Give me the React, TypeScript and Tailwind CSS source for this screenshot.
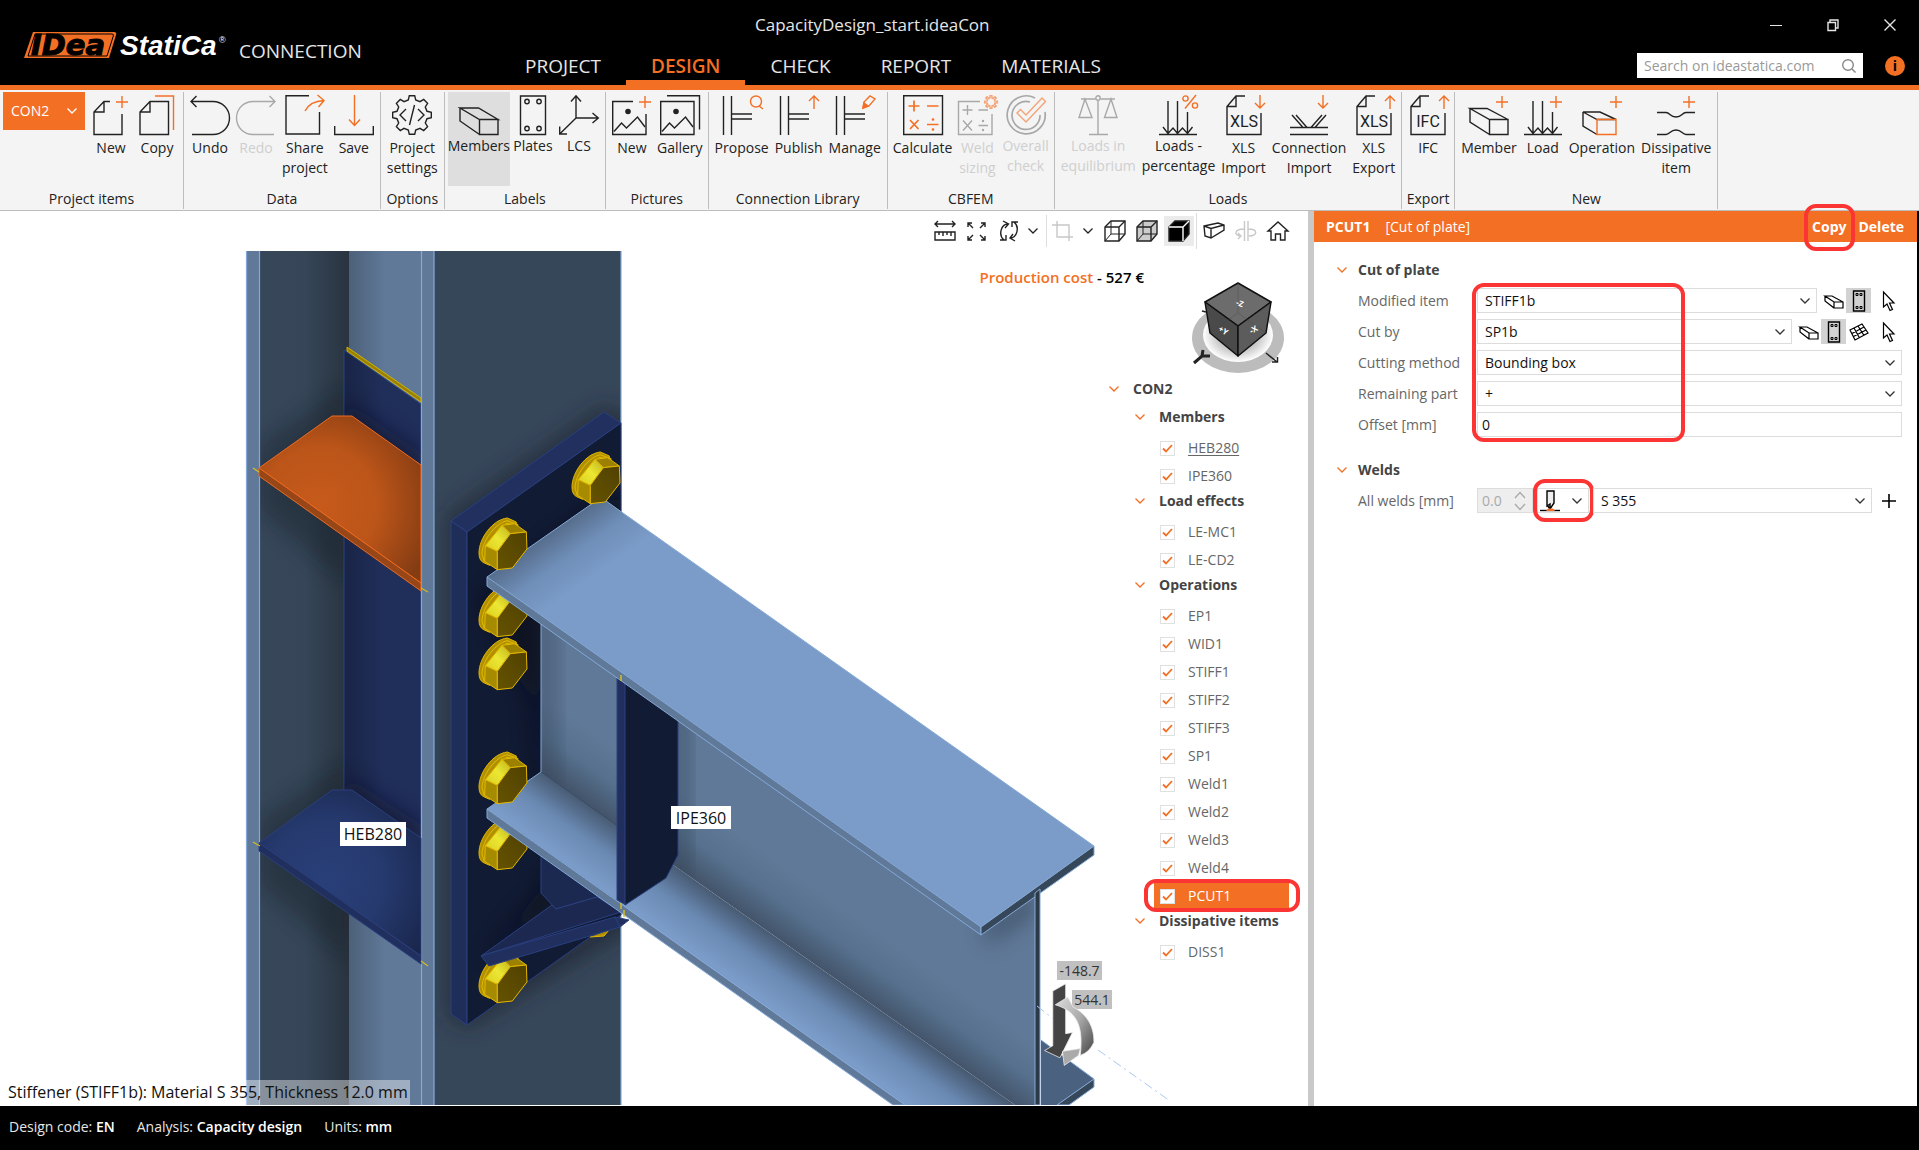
import type { ReactNode } from "react";
import clsx from "clsx";

const ORANGE = "#f36f24";

type IconProps = { children: ReactNode; size?: number; className?: string };

const Icon = ({ children, size = 40, className }: IconProps) => (
  <svg
    width={size}
    height={size}
    viewBox={`0 0 ${size} ${size}`}
    fill="none"
    stroke="currentColor"
    strokeWidth={1.4}
    overflow="visible"
    aria-hidden="true"
    className={clsx("shrink-0", className)}
  >
    {children}
  </svg>
);

const Chevron = ({ className }: { className?: string }) => (
  <svg
    width="10"
    height="6"
    viewBox="0 0 10 6"
    fill="none"
    stroke="currentColor"
    strokeWidth="1.3"
    aria-hidden="true"
    className={clsx("shrink-0", className)}
  >
    <path d="M.5.5 5 5 9.5.5" />
  </svg>
);

const Plus = ({ x, y = 7 }: { x: number; y?: number }) => (
  <path stroke={ORANGE} d={`M${x} ${y - 6}v12M${x - 6} ${y}h12`} />
);

const ArrowV = ({ x, up }: { x: number; up?: boolean }) => (
  <path
    stroke={ORANGE}
    d={
      up
        ? `M${x} 14V1M${x - 5} 6l5-5 5 5`
        : `M${x} 0v13M${x - 5} 8l5 5 5-5`
    }
  />
);

const gearPath = (cx: number, cy: number, outer: number, inner: number) => {
  const points: string[] = [];
  for (let i = 0; i < 8; i++) {
    [
      [-14, inner],
      [-8, outer],
      [8, outer],
      [14, inner],
    ].forEach(([offset, r]) => {
      const a = ((i * 45 + offset) * Math.PI) / 180;
      points.push(
        `${(cx + r * Math.cos(a)).toFixed(1)} ${(cy + r * Math.sin(a)).toFixed(1)}`,
      );
    });
  }
  return `M${points.join("L")}Z`;
};

const SheetIcon = ({ text, up }: { text: string; up?: boolean }) => (
  <Icon>
    <path d="M21 1H12L3 11.5V39.5H37V18M12 1v10.500H3" />
    <text
      x="20"
      y="32"
      textAnchor="middle"
      fill="currentColor"
      stroke="none"
      fontSize="16"
      fontFamily="Roboto, sans-serif"
    >
      {text}
    </text>
    <ArrowV x={36} up={up} />
  </Icon>
);

const NewItemIcon = () => (
  <Icon>
    <path d="M19 6.500H13L3 17V39.500H31V19M13 6.500V17H3" />
    <Plus x={31} />
  </Icon>
);

const CopyIcon = () => (
  <Icon>
    <path d="M3 17 13 6.500H31.500V39.500H3ZM13 6.500V17H3" />
    <path stroke={ORANGE} d="M18 1H36.500V35" />
  </Icon>
);

const UndoIcon = ({ flip }: { flip?: boolean }) => (
  <Icon>
    <g transform={flip ? "translate(40 0) scale(-1 1)" : undefined}>
      <path d="M6.500 1 1 6.500 6.500 12M1 6.500H23a16.500 16.500 0 0 1 0 33H2" />
    </g>
  </Icon>
);

const ShareIcon = () => (
  <Icon>
    <path d="M24 .7H1V39H34.500V17" />
    <path stroke={ORANGE} d="M20 16C23 10 29 6 39 5.500M32.500 0 39 5.500 33.500 12" />
  </Icon>
);

const SaveIcon = () => (
  <Icon>
    <path d="M.7 31V39.500H39.300V31" />
    <path stroke={ORANGE} d="M20.500 0V30M15 24.500 20.500 30.500 26 24.500" />
  </Icon>
);

const SettingsIcon = () => (
  <Icon>
    <path d={gearPath(20, 20, 19.5, 15.5)} />
    <path d="M14 14 8 20 14 26M26 14 32 20 26 26M22.500 10 17.500 30" />
  </Icon>
);

const MemberIcon = () => (
  <Icon>
    <path d="M1 13H19.500L39 24.500H20.500ZM20.500 24.500H39V39.500H20.500ZM1 13V26L20.500 39.500" />
  </Icon>
);

const PlateIcon = () => (
  <Icon>
    <path d="M7.500 1H32.500V39.500H7.500Z" />
    <circle cx="14" cy="6.500" r="2.200" />
    <circle cx="26" cy="6.500" r="2.200" />
    <circle cx="14" cy="33.500" r="2.200" />
    <circle cx="26" cy="33.500" r="2.200" />
  </Icon>
);

const AxesIcon = () => (
  <Icon>
    <path d="M17 23V1M12 6.500 17 .7 22 6.500M17 23H39M33.500 18 39.300 23 33.500 28M17 23 .7 39M.7 31.500V39H8" />
  </Icon>
);

const PictureIcon = ({ gallery }: { gallery?: boolean }) => (
  <Icon>
    {gallery ? (
      <>
        <path d="M.7 6.500H34V39.500H.7Z" />
        <path d="M7 .7H39.500V34.500" />
      </>
    ) : (
      <>
        <path d="M21 6.500H.7V39.500H34V19" />
        <Plus x={33} />
      </>
    )}
    <path d="M2 36.500 9.500 28 14.500 33 25.500 22 33 32" />
    <circle cx="16" cy="16.500" r="2.800" fill="currentColor" stroke="none" />
  </Icon>
);

const LibraryIcon = ({ kind }: { kind: "propose" | "publish" | "manage" }) => (
  <Icon>
    <path d="M1.500 1V40M9.500 1V40M9.500 19H30M9.500 24H30" />
    {kind === "propose" && (
      <g stroke={ORANGE}>
        <circle cx="34" cy="6.500" r="5.500" />
        <path d="M37 11 41 14" />
      </g>
    )}
    {kind === "publish" && <ArrowV x={35} up />}
    {kind === "manage" && (
      <g stroke={ORANGE}>
        <path d="M28 13 29 7 35 1 40 4 34 11Z" />
        <path d="M28 13 29 8 33 11Z" fill={ORANGE} />
      </g>
    )}
  </Icon>
);

const CalculateIcon = () => (
  <Icon>
    <path d="M.7 .7H39.500V39.500H.7Z" />
    <path
      stroke={ORANGE}
      strokeWidth="1.700"
      d="M11 5.500V16.500M5.500 11H16.500M24 11H35.500M7 25 15.500 34M15.500 25 7 34M24 29.500H35.500"
    />
    <circle cx="30" cy="24.500" r="1.300" fill={ORANGE} stroke="none" />
    <circle cx="30" cy="34.500" r="1.300" fill={ORANGE} stroke="none" />
  </Icon>
);

const WeldSizingIcon = () => (
  <Icon>
    <path d="M23 6.500H1.500V39.500H35V19" />
    <path d="M10.500 10V20M5.500 15H15.500M21.500 15H31M6 25.500 15 35.500M15 25.500 6 35.500M21.500 30.500H31" />
    <circle cx="26" cy="26" r="1.200" fill="currentColor" stroke="none" />
    <circle cx="26" cy="35" r="1.200" fill="currentColor" stroke="none" />
    <path stroke={ORANGE} d={gearPath(34, 7, 6.5, 4)} />
  </Icon>
);

const OverallCheckIcon = () => (
  <Icon>
    <path d="M29 3A19 19 0 1 0 39 17" strokeWidth="1.700" />
    <path d="M24 7A14 14 0 1 0 34 20" strokeWidth="1.700" />
    <path stroke={ORANGE} d="M11 18 14.500 14.500 20 20 36 3 39.500 6.500 20 27Z" />
  </Icon>
);

const ScalesIcon = () => (
  <Icon>
    <circle cx="20" cy="3" r="2.200" />
    <path d="M20 5.500V39M11 39.500H30M3 4H17.500M22.500 4H37M7 4 1 22.500H14Z M33 4 26.500 22.500H39Z" />
  </Icon>
);

const LoadIcon = ({ percent }: { percent?: boolean }) => (
  <Icon>
    <path d="M1 39.500H39M10 6V38M19.500 6V38M29.500 17V38M5 32 10 38.500 15 33 19.500 38.500 24.500 33 29.500 38.500 34.500 32" />
    {percent ? (
      <g stroke={ORANGE}>
        <path d="M38 0 27 13.500" />
        <circle cx="27.500" cy="3.500" r="2.600" />
        <circle cx="37" cy="10.500" r="2.600" />
      </g>
    ) : (
      <Plus x={33} />
    )}
  </Icon>
);

const ConnectionIcon = () => (
  <Icon>
    <path d="M1 32.500H39M1 39.500H39M3 20 14 32.500M7 20 18 32.500M22 32.500 33 20M26 32.500 37 20" />
    <ArrowV x={34} />
  </Icon>
);

const NewMemberIcon = () => (
  <Icon>
    <path d="M1 13.500H18L39 24.500H20.500ZM20.500 24.500H39V39.500H20.500ZM1 13.500V27L20.500 39.500" />
    <Plus x={33} />
  </Icon>
);

const OperationIcon = () => (
  <Icon>
    <path d="M1 17H18L34 24.500H15ZM1 17V31L15 39.500" />
    <path stroke={ORANGE} d="M15 24.500H34V39.500H15Z" />
    <Plus x={34} />
  </Icon>
);

const DissipativeIcon = () => (
  <Icon>
    <path d="M1 17.500H10C14 17.500 14 22 20 22S26 17.500 30 17.500H39M1 39.500H10C14 39.500 14 35 20 35S26 39.500 30 39.500H39" />
    <Plus x={33} />
  </Icon>
);

type RibbonItem = {
  lines: string[];
  icon: ReactNode;
  disabled?: boolean;
  active?: boolean;
  tight?: boolean;
};

type RibbonGroup = {
  title: string;
  picker?: boolean;
  narrow?: boolean;
  items: RibbonItem[];
};

const ribbonGroups: RibbonGroup[] = [
  {
    title: "Project items",
    picker: true,
    items: [
      { lines: ["New"], icon: <NewItemIcon /> },
      { lines: ["Copy"], icon: <CopyIcon /> },
    ],
  },
  {
    title: "Data",
    items: [
      { lines: ["Undo"], icon: <UndoIcon /> },
      { lines: ["Redo"], icon: <UndoIcon flip />, disabled: true },
      { lines: ["Share", "project"], icon: <ShareIcon /> },
      { lines: ["Save"], icon: <SaveIcon /> },
    ],
  },
  {
    title: "Options",
    items: [{ lines: ["Project", "settings"], icon: <SettingsIcon /> }],
  },
  {
    title: "Labels",
    items: [
      { lines: ["Members"], icon: <MemberIcon />, active: true, tight: true },
      { lines: ["Plates"], icon: <PlateIcon />, tight: true },
      { lines: ["LCS"], icon: <AxesIcon />, tight: true },
    ],
  },
  {
    title: "Pictures",
    narrow: true,
    items: [
      { lines: ["New"], icon: <PictureIcon /> },
      { lines: ["Gallery"], icon: <PictureIcon gallery /> },
    ],
  },
  {
    title: "Connection Library",
    items: [
      { lines: ["Propose"], icon: <LibraryIcon kind="propose" /> },
      { lines: ["Publish"], icon: <LibraryIcon kind="publish" /> },
      { lines: ["Manage"], icon: <LibraryIcon kind="manage" /> },
    ],
  },
  {
    title: "CBFEM",
    narrow: true,
    items: [
      { lines: ["Calculate"], icon: <CalculateIcon /> },
      { lines: ["Weld", "sizing"], icon: <WeldSizingIcon />, disabled: true },
      { lines: ["Overall", "check"], icon: <OverallCheckIcon />, disabled: true, tight: true },
    ],
  },
  {
    title: "Loads",
    items: [
      { lines: ["Loads in", "equilibrium"], icon: <ScalesIcon />, disabled: true, tight: true },
      { lines: ["Loads -", "percentage"], icon: <LoadIcon percent />, tight: true },
      { lines: ["XLS", "Import"], icon: <SheetIcon text="XLS" /> },
      { lines: ["Connection", "Import"], icon: <ConnectionIcon /> },
      { lines: ["XLS", "Export"], icon: <SheetIcon text="XLS" up /> },
    ],
  },
  { title: "Export", items: [{ lines: ["IFC"], icon: <SheetIcon text="IFC" up /> }] },
  {
    title: "New",
    items: [
      { lines: ["Member"], icon: <NewMemberIcon /> },
      { lines: ["Load"], icon: <LoadIcon /> },
      { lines: ["Operation"], icon: <OperationIcon /> },
      { lines: ["Dissipative", "item"], icon: <DissipativeIcon /> },
    ],
  },
];

const Logo = () => (
  <svg width="205" height="34" viewBox="0 0 205 34" role="img" aria-label="IDEA StatiCa">
    <path d="M9 3H90Q93 3 92 6L85 29H0Z" fill={ORANGE} />
    <path
      d="M11 5H88Q90 5 89.300 7L83 27H4Z"
      fill="none"
      stroke="#000"
      strokeWidth="1"
    />
    <text
      x="7"
      y="26"
      fontSize="29"
      fontWeight="700"
      fontStyle="italic"
      stroke="#000"
      strokeWidth="1"
      fontFamily="'DejaVu Sans', sans-serif"
    >
      IDea
    </text>
    <text
      x="96"
      y="26"
      fontSize="28"
      fontWeight="700"
      fontStyle="italic"
      fill="#fff"
      fontFamily="'Liberation Sans', sans-serif"
    >
      StatiCa
    </text>
    <text x="195" y="14" fontSize="9" fill="#fff" fontFamily="'Liberation Sans', sans-serif">
      ®
    </text>
  </svg>
);

const tabs = ["PROJECT", "DESIGN", "CHECK", "REPORT", "MATERIALS"];

const Header = () => (
  <header className="relative flex h-[90px] shrink-0 items-end justify-between border-b-[5px] border-[#f36f24] bg-black text-[#e6e6e6]">
    <div className="flex h-full items-center gap-[10px] pl-6 pt-[6px]">
      <Logo />
      <span className="pt-[10px] text-[19px] leading-6">CONNECTION</span>
    </div>
    <nav className="absolute bottom-0 left-[500px] flex">
      {tabs.map((tab) => (
        <a
          key={tab}
          href={`#${tab.toLowerCase()}`}
          className={clsx(
            "border-b-[5px] px-[25px] pb-[2px] text-[19px] leading-6",
            tab === "DESIGN"
              ? "border-[#f36f24] font-semibold text-[#f36f24]"
              : "border-transparent",
          )}
        >
          {tab}
        </a>
      ))}
    </nav>
    <h1 className="absolute left-[755px] top-[13px] text-[17px] leading-6">
      CapacityDesign_start.ideaCon
    </h1>
    <div className="flex h-full flex-col items-end justify-between pb-[7px] pr-[14px] pt-[19px]">
      <div className="flex items-center gap-[35px] pr-[9px]">
        <button aria-label="Minimize" className="pr-[10px]">
          <Icon size={12}>
            <path d="M0 6.500H12" strokeWidth="1" />
          </Icon>
        </button>
        <button aria-label="Restore">
          <Icon size={12}>
            <path d="M1 3.500H8.500V11.500H1ZM3 3.500V1H11V9H8.500" />
          </Icon>
        </button>
        <button aria-label="Close" className="pl-[10px]">
          <Icon size={12}>
            <path d="M.5 .5 11.500 11.500M11.500 .5 .5 11.500" />
          </Icon>
        </button>
      </div>
      <div className="flex items-center gap-[22px]">
        <label className="flex h-[25px] w-[226px] items-center bg-white px-[7px] text-[#888]">
          <input
            type="search"
            aria-label="Search"
            placeholder="Search on ideastatica.com"
            className="min-w-0 flex-1 text-[14px] outline-none placeholder:text-[#999]"
          />
          <Icon size={14}>
            <circle cx="6" cy="6" r="5.300" />
            <path d="M10 10 13.500 13.500" />
          </Icon>
        </label>
        <button
          aria-label="Information"
          className="size-5 rounded-full bg-[#f36f24] text-[14px] font-bold leading-5 text-black"
        >
          i
        </button>
      </div>
    </div>
  </header>
);

const Ribbon = () => (
  <div className="flex h-[121px] shrink-0 border-b border-[#bdbdbd] bg-[#f4f4f4] pt-[2px] text-[14px] leading-5 text-[#222]">
    {ribbonGroups.map((group) => (
      <section
        key={group.title}
        className="mb-[1px] flex flex-col items-center justify-between border-r border-[#bdbdbd] px-[3px]"
      >
        <div className="flex items-start">
          {group.picker && (
            <button className="mr-[3px] flex h-[38px] w-[82px] items-center justify-between bg-[#f36f24] px-[8px] text-white">
              CON2
              <Chevron />
            </button>
          )}
          {group.items.map((item) => (
            <button
              key={item.lines.join(" ")}
              disabled={item.disabled}
              className={clsx(
                "flex h-[94px] min-w-[46px] flex-col items-center pt-[3px]",
                item.tight ? "gap-px" : "gap-[3px]",
                item.active && "bg-[#dedede]",
                !item.active && (group.narrow ? "px-[2px]" : "px-[3px]"),
                item.disabled && "text-[#cfcfcf] [&>svg]:opacity-60 [&>svg]:text-[#777]",
              )}
            >
              {item.icon}
              <span>
                {item.lines.map((line) => (
                  <span key={line} className="block whitespace-nowrap">
                    {line}
                  </span>
                ))}
              </span>
            </button>
          ))}
        </div>
        <h2 className="whitespace-nowrap">{group.title}</h2>
      </section>
    ))}
  </div>
);

const Bolt = ({ x, y }: { x: number; y: number }) => (
  <g transform={`translate(${x} ${y}) scale(.3333)`} stroke="#e3b800" strokeWidth="3" strokeLinejoin="round">
    <path
      d="M85 0C40 5 0 62 0 105 0 120 5 130 14 134L32 142 110 40 112 12Z"
      fill="#b09000"
    />
    <path d="M85 8C48 16 10 68 9 108L16 132M80 16 118 22M84 8 118 20" fill="none" />
    <path d="M19 83 69 22 94 47 55 100Z" fill="url(#bolt-light)" />
    <path d="M19 83 55 100V155L17 130Z" fill="#a68a00" />
    <path d="M69 22 107 17 142 42 94 47Z" fill="#9c8000" />
    <path d="M55 100 94 47 142 42 144 93 100 150 55 155Z" fill="url(#bolt-dark)" />
  </g>
);

type SceneLabelProps = {
  x: number;
  y: number;
  w: number;
  h: number;
  text: string;
  load?: boolean;
};

const SceneLabel = ({ x, y, w, h, text, load }: SceneLabelProps) => (
  <g>
    <rect x={x} y={y} width={w} height={h} fill={load ? "#c0c0c0" : "#fff"} />
    <text
      x={x + w / 2}
      y={y + h / 2 + (load ? 5 : 6)}
      textAnchor="middle"
      fontSize={load ? 14 : 16}
      fill={load ? "#333" : "#111"}
    >
      {text}
    </text>
  </g>
);

// Isometric view of the joint; coordinates are those of the 3D viewport
const Scene = () => (
  <svg
    viewBox="0 251 1308 854"
    preserveAspectRatio="xMinYMin slice"
    role="img"
    aria-label="3D model of the connection"
    className="absolute inset-x-0 bottom-0 top-10 h-[854px] w-full"
  >
    <defs>
      <linearGradient id="inner-flange" x1="0" x2="1" y1="0" y2="0">
        <stop offset="0" stopColor="#37475a" />
        <stop offset=".5" stopColor="#364658" />
        <stop offset="1" stopColor="#28333f" />
      </linearGradient>
      <linearGradient id="column-web" x1="0" x2="1" y1="0" y2="0">
        <stop offset="0" stopColor="#4c6079" />
        <stop offset=".5" stopColor="#607998" />
        <stop offset="1" stopColor="#607998" />
      </linearGradient>
      <linearGradient id="doubler" x1="0" x2="1" y1="0" y2="0">
        <stop offset="0" stopColor="#192445" />
        <stop offset=".5" stopColor="#202e5a" />
        <stop offset="1" stopColor="#202e5a" />
      </linearGradient>
      <radialGradient id="stiff-orange" gradientUnits="userSpaceOnUse" cx="320" cy="505" r="115">
        <stop offset="0" stopColor="#c65a1b" />
        <stop offset=".5" stopColor="#bc5519" />
        <stop offset="1" stopColor="#853c13" />
      </radialGradient>
      <radialGradient id="stiff-blue" gradientUnits="userSpaceOnUse" cx="325" cy="880" r="115">
        <stop offset="0" stopColor="#293f78" />
        <stop offset=".5" stopColor="#263a6f" />
        <stop offset="1" stopColor="#1a274d" />
      </radialGradient>
      <linearGradient id="bolt-light" x1="0" x2="1" y1="1" y2="0">
        <stop offset="0" stopColor="#d8cf20" />
        <stop offset=".5" stopColor="#ece733" />
        <stop offset="1" stopColor="#bdb21c" />
      </linearGradient>
      <linearGradient id="bolt-dark" x1="0" x2="1" y1="1" y2="0">
        <stop offset="0" stopColor="#655300" />
        <stop offset="1" stopColor="#514100" />
      </linearGradient>
      <linearGradient id="top-flange" gradientUnits="userSpaceOnUse" x1="541" x2="576" y1="539" y2="589">
        <stop offset="0" stopColor="#566d8c" />
        <stop offset=".5" stopColor="#6f8eb8" />
        <stop offset="1" stopColor="#7b9cc8" />
      </linearGradient>
      <linearGradient id="low-flange" gradientUnits="userSpaceOnUse" x1="800" x2="766" y1="954" y2="1002">
        <stop offset="0" stopColor="#475a72" />
        <stop offset=".5" stopColor="#6a89b2" />
        <stop offset="1" stopColor="#7b9cc8" />
      </linearGradient>
      <linearGradient id="beam-web" gradientUnits="userSpaceOnUse" x1="800" x2="836" y1="954" y2="903">
        <stop offset="0" stopColor="#43546a" />
        <stop offset=".5" stopColor="#56708d" />
        <stop offset="1" stopColor="#607998" />
      </linearGradient>
      <linearGradient id="moment" x1="0" x2="1" y1="0" y2="1">
        <stop offset="0" stopColor="#ddd" />
        <stop offset=".5" stopColor="#aaa" />
        <stop offset="1" stopColor="#444" />
      </linearGradient>
      <filter id="soft" x="-50%" y="-50%" width="200%" height="200%">
        <feGaussianBlur stdDeviation="10" />
      </filter>
      <clipPath id="clip-inner">
        <path d="M259 251H349V1105H259Z" />
      </clipPath>
      <clipPath id="clip-web">
        <path d="M344 350 421 404V850H344Z" />
      </clipPath>
      <clipPath id="clip-outer">
        <path d="M434 251H621V1105H434Z" />
      </clipPath>
      <clipPath id="clip-plate">
        <path d="M467 532 621 423V915L467 1025Z" />
      </clipPath>
      <clipPath id="clip-beam-web">
        <path d="M541 615 981 927 1035 890V1105H1015L541 772Z" />
      </clipPath>
    </defs>

    {/* column */}
    <path d="M246 251H260V1105H246Z" fill="#607998" />
    <path d="M259 251H350V1105H259Z" fill="url(#inner-flange)" />
    <path d="M349 251H421V1105H349Z" fill="url(#column-web)" />
    <g clipPath="url(#clip-inner)">
      <path
        d="M259 445 349 385V585L259 510ZM259 820 349 760V960L259 885Z"
        fill="#10161c"
        opacity=".35"
        filter="url(#soft)"
      />
    </g>
    <path d="M344 350 421 404V900H344Z" fill="url(#doubler)" stroke="#2d4580" />
    <path d="M347 347 421 398V402L347 351Z" fill="#9a8200" stroke="#e3c000" strokeWidth=".8" />
    <g clipPath="url(#clip-web)">
      <path
        d="M345 400 421 453V480H345ZM345 775 421 825V850H345Z"
        fill="#0a1020"
        opacity=".5"
        filter="url(#soft)"
      />
    </g>
    <path d="M349 910 421 964V1105H349Z" fill="url(#column-web)" />
    <path d="M421 251H434V1105H421Z" fill="#607998" />
    <path d="M434 251H621V1105H434Z" fill="#37475a" />
    <g clipPath="url(#clip-outer)">
      <path
        d="M446 515 604 404 640 425V925L467 1030 446 1015Z"
        fill="#1a242e"
        opacity=".6"
        filter="url(#soft)"
      />
    </g>
    <path d="M246.500 251V1105M259.500 251V1105M421.500 251V1105M434 251V1105M621 251V1105" stroke="#84a9d8" strokeWidth="1.200" />

    {/* column stiffeners */}
    <path d="M259 468 332 416H352L421 465V583Z" fill="url(#stiff-orange)" stroke="#ef6a20" />
    <path d="M259 468 421 583V591L259 476Z" fill="#974617" stroke="#ef6a20" />
    <path d="M259 843 332 790H352L421 838V956Z" fill="url(#stiff-blue)" stroke="#2a3f7c" />
    <path d="M259 843 421 956V964L259 851Z" fill="#202f5d" stroke="#2a3f7c" />
    <path
      d="M253 468 259 472M421 588 428 592M253 842 260 846M421 961 428 966"
      stroke="#d3bd20"
      strokeWidth="1.200"
    />

    {/* end plate */}
    <path d="M451 521 604 412 621 423 467 532Z" fill="#21305f" stroke="#2a4080" />
    <path d="M451 521 467 532V1025L451 1014Z" fill="#1f2d59" stroke="#2a4080" />
    <path d="M467 532 621 423V915L467 1025Z" fill="#111b34" stroke="#2a4080" />
    <g clipPath="url(#clip-plate)">
      <path
        d="M480 600 600 500H621V560H541V890L480 960 560 900 541 860 530 700Z"
        fill="#080b14"
        opacity=".6"
        filter="url(#soft)"
      />
    </g>

    <Bolt x={479} y={585} />
    <Bolt x={479} y={638} />
    <Bolt x={479} y={818} />
    <Bolt x={479} y={951} />
    <path d="M590 937 604 936 609 930" fill="#b09000" stroke="#e3b800" />

    {/* haunch under the lower flange */}
    <path d="M541 845V893L556 909 597 897 621 912V880Z" fill="#1b2850" stroke="#2a4080" />
    <path d="M481 956 552 905 556 909 597 897 621 912 487 954Z" fill="#1c284f" stroke="#2a4080" />
    <path d="M481 956 487 954 615 917 629 920 620 927 489 966Z" fill="#202f5d" stroke="#2a4080" />
    <path d="M615 917 620 927" stroke="#2a4080" />

    {/* beam */}
    <path d="M541 600 981 927 1035 890V1105H1015L541 772Z" fill="url(#beam-web)" />
    <g clipPath="url(#clip-beam-web)">
      <path d="M536 610H556V790H536Z" fill="#37475a" opacity=".5" filter="url(#soft)" />
      <path d="M672 700H688V880H672Z" fill="#37475a" opacity=".6" filter="url(#soft)" />
      <path d="M981 927 1035 888V915L990 945Z" fill="#37475a" opacity=".6" filter="url(#soft)" />
    </g>
    <path d="M541 620V772" stroke="#84a9d8" />
    <path d="M487 809 541 772 1015 1105H905Z" fill="url(#low-flange)" />
    <path d="M487 809 541 772" stroke="#84a9d8" />
    <path d="M617 672 626 678V905L617 900Z" fill="#202f5d" stroke="#2a4080" />
    <path d="M625 680 678 715V855L666 878 625 905Z" fill="#111b34" stroke="#2a4080" />
    <path d="M487 809 905 1105H893L487 818Z" fill="#607998" stroke="#84a9d8" />
    <path d="M487 577 593 503 606 501 1094 846 981 927Z" fill="url(#top-flange)" />
    <path d="M487 577 593 503M606 501 1094 846" stroke="#84a9d8" />
    <path d="M487 577 981 927V935L487 586Z" fill="#607998" stroke="#84a9d8" />
    <path d="M981 927 1094 846V855L981 935Z" fill="#37475a" stroke="#84a9d8" />
    <path d="M621 675V681M621 903V909M624 910V917" stroke="#d3bd20" strokeWidth="1.500" />
    <path d="M1041 1040 1094 1079 1057 1105H1041Z" fill="#4a6180" />
    <path d="M1094 1079V1087L1069 1105H1057Z" fill="#37475a" stroke="#84a9d8" />
    <path d="M1041 1040 1094 1079" stroke="#84a9d8" />
    <path d="M1035 893 1040 889V1105H1035Z" fill="#2c3947" stroke="#84a9d8" />
    <Bolt x={572} y={452} />
    <Bolt x={479} y={518} />
    <Bolt x={479} y={752} />

    {/* end forces */}
    <path d="M1037 1006 1060 1024M1098 1050 1170 1101" stroke="#a9c8f0" strokeDasharray="9 4 2 4" />
    <SceneLabel x={1057} y={961} w={45} h={19} text="-148.7" load />
    <SceneLabel x={1072} y={990} w={40} h={19} text="544.1" load />
    <g transform="translate(600 480) scale(.3571 .4018)" stroke="#eee" strokeWidth="2">
      <path d="M1268 1272 1304 1254V1378L1323 1375 1288 1438 1245 1420 1268 1408Z" fill="#444" />
      <path d="M1275 1306 1310 1287 1325 1312C1350 1322 1385 1350 1383 1400Q1370 1425 1345 1432C1352 1370 1345 1325 1275 1306Z" fill="url(#moment)" />
      <path d="M1295 1422 1345 1415 1340 1432 1300 1457Z" fill="#aaa" />
    </g>

    <SceneLabel x={340} y={822} w={66} h={24} text="HEB280" />
    <SceneLabel x={671} y={806} w={60} h={23} text="IPE360" />
  </svg>
);

const CubeIcon = ({ fill }: { fill?: "grey" | "black" }) => (
  <Icon size={22}>
    <path
      d="M1 7 7 1H21V14L15 21H1Z"
      fill={fill === "black" ? "#000" : fill === "grey" ? "#ccc" : "none"}
    />
    <path d="M1 7H15V21M15 7 21 1" stroke={fill === "black" ? "#fff" : "currentColor"} />
    {fill !== "black" && <path d="M7 1V14H21M7 14 1 21" strokeWidth="1" />}
  </Icon>
);

const toolButton = "mr-[2px] flex h-[30px] w-[30px] items-center justify-center";

const ViewToolbar = () => (
  <div className="flex h-10 items-center justify-end pr-[13px] text-[#222]">
    <button aria-label="Measure" className={toolButton}>
      <Icon size={22}>
        <path d="M1 4H21M4 1 1 4 4 7M18 1 21 4 18 7M1 12H21V20H1ZM5 12V15M9 12V16M13 12V15M17 12V16" />
      </Icon>
    </button>
    <button aria-label="Zoom all" className={toolButton}>
      <Icon size={22}>
        <path d="M2 7V3H6M2 3 7 8M15 3H19V7M19 3 14 8M2 16V20H6M2 20 7 15M19 16V20H15M19 20 14 15" />
      </Icon>
    </button>
    <button aria-label="Rotate" className={toolButton}>
      <Icon size={22}>
        <path d="M6 20C0 15 3 4 10 4M5 1 10.500 4 7 8M2 20H8V15M16 2C22 7 19 18 12 18M17 21 12 18 15 14M20 2H14V7" />
      </Icon>
    </button>
    <button aria-label="Rotate options" className="pl-[2px]">
      <Chevron />
    </button>
    <span className="ml-2 mr-[3px] h-8 w-px bg-[#ddd]" />
    <button aria-label="Section" disabled className="flex size-[26px] items-center justify-center text-[#c8c8c8]">
      <Icon size={22}>
        <path d="M0 5H17V21M5 1V17H21" />
      </Icon>
    </button>
    <button aria-label="Section options" className="px-[7px]">
      <Chevron />
    </button>
    <button aria-label="Wireframe" className={toolButton}>
      <CubeIcon />
    </button>
    <button aria-label="Transparent" className={toolButton}>
      <CubeIcon fill="grey" />
    </button>
    <button aria-label="Solid" className="flex size-[30px] items-center justify-center bg-[#ebebeb]">
      <CubeIcon fill="black" />
    </button>
    <span className="mx-[2px] h-9 w-px bg-[#ddd]" />
    <button aria-label="Member shape" className={toolButton}>
      <Icon size={22}>
        <path d="M1 6 15 3 21 5V10L8 18 2 16ZM1 6 8 8.500 21 5M8 8.500V18" />
      </Icon>
    </button>
    <button aria-label="Mirror" disabled className={clsx(toolButton, "text-[#c8c8c8]")}>
      <Icon size={22}>
        <path d="M9.500 1V21M13 1V21M9 9C-1 9-1 15 5 16M13.500 9C23 9 23 16 14 16M3 13 6 16 3 19" />
      </Icon>
    </button>
    <button aria-label="Home view" className={toolButton}>
      <Icon size={22}>
        <path d="M1 11 11 2 21 11H18V20H13.500V14H8.500V20H4V11Z" />
      </Icon>
    </button>
  </div>
);

const ViewCube = () => (
  <svg width="100" height="94" viewBox="0 0 100 94" role="img" aria-label="View cube">
    <defs>
      <radialGradient id="cube-shade">
        <stop offset="0" stopColor="#777" />
        <stop offset="1" stopColor="#fff" />
      </radialGradient>
    </defs>
    <ellipse cx="50" cy="57" rx="46" ry="35" fill="#bcbcbc" />
    <ellipse cx="50" cy="54" rx="35" ry="27" fill="url(#cube-shade)" />
    <g stroke="#111" strokeWidth="1.500" strokeLinejoin="round">
      <path d="M17 21 50 2 83 21 50 45Z" fill="#6c6c6c" />
      <path d="M17 21 50 45V75L22 52Z" fill="#4a4a4a" />
      <path d="M83 21 50 45V75L78 52Z" fill="#5c5c5c" />
    </g>
    <path d="M50 2V32L22 52M50 32 78 52" stroke="#444" strokeWidth=".7" opacity=".5" fill="none" />
    <g fill="#fff" fontSize="8" fontWeight="700" textAnchor="middle">
      <text transform="translate(51 25) rotate(20)">-Z</text>
      <text transform="translate(34 52) rotate(30)">+Y</text>
      <text transform="translate(67 51) rotate(-30)">-X</text>
    </g>
    <path d="M6 82 14 75 22 75M14 75 15 69" stroke="#222" strokeWidth="3" fill="none" />
    <path d="M78 72 89 81M84 81H89.500V76M14 30 18 31" stroke="#222" fill="none" strokeWidth="1.500" />
  </svg>
);

const tree = [
  { title: "Members", items: ["HEB280", "IPE360"] },
  { title: "Load effects", items: ["LE-MC1", "LE-CD2"] },
  {
    title: "Operations",
    items: [
      "EP1",
      "WID1",
      "STIFF1",
      "STIFF2",
      "STIFF3",
      "SP1",
      "Weld1",
      "Weld2",
      "Weld3",
      "Weld4",
      "PCUT1",
    ],
  },
  { title: "Dissipative items", items: ["DISS1"] },
];

const headingRow =
  "flex h-7 items-center gap-[14px] pb-[6px] font-bold text-[#444]";

const TreeItem = ({ name }: { name: string }) => {
  const selected = name === "PCUT1";
  return (
    <li className="relative py-px">
      <label
        className={clsx(
          "flex h-[26px] items-center gap-[13px] pl-[6px]",
          selected ? "bg-[#f36f24] text-white" : "text-[#666]",
        )}
      >
        <span className="relative flex size-[15px] items-center justify-center">
          <input
            type="checkbox"
            defaultChecked
            className="peer absolute inset-0 appearance-none border border-[#e0e0e0] bg-white"
          />
          <svg
            width="11"
            height="9"
            viewBox="0 0 11 9"
            fill="none"
            stroke={ORANGE}
            strokeWidth="1.800"
            className="relative hidden peer-checked:block"
          >
            <path d="M1 4.500 4 7.500 10 1" />
          </svg>
        </span>
        <span className={clsx(name === "HEB280" && "underline underline-offset-2")}>{name}</span>
      </label>
      {selected && (
        <span className="pointer-events-none absolute -bottom-[2px] -left-[10px] -right-[11px] -top-[3px] rounded-xl border-4 border-[#fb3434]" />
      )}
    </li>
  );
};

const ModelTree = () => (
  <nav aria-label="Model" className="mt-[3px] w-[199px] self-end text-[14px] leading-5">
    <h2 className={headingRow}>
      <Chevron className="text-[#f36f24]" />
      CON2
    </h2>
    {tree.map((branch) => (
      <section key={branch.title} className="pl-[26px]">
        <h3 className={headingRow}>
          <Chevron className="text-[#f36f24]" />
          {branch.title}
        </h3>
        <ul className="ml-[19px] mr-[19px]">
          {branch.items.map((name) => (
            <TreeItem key={name} name={name} />
          ))}
        </ul>
      </section>
    ))}
  </nav>
);

const Viewport = () => (
  <section className="relative flex min-w-0 flex-1 flex-col overflow-hidden bg-white">
    <Scene />
    <div className="relative flex flex-1 flex-col">
      <ViewToolbar />
      <p className="mr-[164px] mt-4 self-end text-[15px] font-semibold leading-5">
        <span className="text-[#f36f24]">Production cost</span> - 527 €
      </p>
      <div className="-mt-[6px] mr-5 self-end">
        <ViewCube />
      </div>
      <ModelTree />
      <p className="mt-auto self-start bg-white/40 pb-[2px] pl-2 pr-[2px] text-[16px] leading-6 text-[#111]">
        Stiffener (STIFF1b): Material S 355, Thickness 12.0 mm
      </p>
    </div>
  </section>
);

type SelectBoxProps = { id: string; value: string; className?: string };

const SelectBox = ({ id, value, className }: SelectBoxProps) => (
  <span className={clsx("relative flex h-[25px] min-w-0 flex-1 items-center", className)}>
    <select
      id={id}
      className="h-full w-full appearance-none border border-[#dcdcdc] bg-white pl-[7px] text-[#111]"
    >
      <option>{value}</option>
    </select>
    <Chevron className="pointer-events-none absolute right-[7px] text-[#333]" />
  </span>
);

const SmallMember = () => (
  <Icon size={20}>
    <path d="M1 5H8L19 11H10ZM10 11H19V17H10ZM1 5V10L10 17" strokeWidth="1.200" />
  </Icon>
);

const SmallPlate = () => (
  <Icon size={20}>
    <path d="M4.500 0H15.500V20H4.500Z" />
    <path d="M7 2.500H9V4.500H7ZM11 2.500H13V4.500H11ZM7 15.500H9V17.500H7ZM11 15.500H13V17.500H11Z" strokeWidth="1" />
  </Icon>
);

const MeshIcon = () => (
  <Icon size={20}>
    <path
      d="M1 8 13 2 19 11 6 18ZM5 6 10.500 16M9 4 15 13.500M3 11.500 15 5M4.500 14.500 17 8"
      strokeWidth="1.200"
    />
  </Icon>
);

const CursorIcon = () => (
  <Icon size={20}>
    <path d="M4.500 1V16L8 13 11 19.500 13.500 18.500 10.500 12H15Z" strokeWidth="1.200" />
  </Icon>
);

const pickButton = "flex size-[25px] items-center justify-center";

const Field = ({
  id,
  label,
  children,
}: {
  id: string;
  label: string;
  children: ReactNode;
}) => (
  <div className="flex h-[31px] items-center">
    <label htmlFor={id} className="w-[119px] shrink-0 whitespace-nowrap text-[#666]">
      {label}
    </label>
    {children}
  </div>
);

const SectionTitle = ({ children }: { children: ReactNode }) => (
  <h3 className="-ml-[21px] flex h-[31px] items-center gap-[11px] font-bold text-[#444]">
    <Chevron className="text-[#f36f24]" />
    {children}
  </h3>
);

const PropertyPanel = () => (
  <aside className="w-[605px] shrink-0 border-r-2 border-black bg-white text-[14px] leading-5 text-black">
    <div className="flex h-[31px] items-center bg-[#f36f24] pl-3 pr-[13px] text-white">
      <h2 className="font-bold">PCUT1</h2>
      <span className="ml-[15px] flex-1">[Cut of plate]</span>
      <button className="relative font-bold">
        Copy
        <span className="pointer-events-none absolute -bottom-[14px] -left-[8px] -right-[9px] -top-[13px] rounded-xl border-4 border-[#fb3434]" />
      </button>
      <button className="ml-3 font-bold">Delete</button>
    </div>
    <form className="pl-[44px] pr-[15px] pt-3">
      <SectionTitle>Cut of plate</SectionTitle>
      <div className="relative">
        <Field id="modified" label="Modified item">
          <SelectBox id="modified" value="STIFF1b" />
          <div className="ml-[4px] mr-px flex">
            <button type="button" aria-label="Pick member" className={pickButton}>
              <SmallMember />
            </button>
            <button type="button" aria-label="Pick plate" className={clsx(pickButton, "bg-[#d2d2d2]")}>
              <SmallPlate />
            </button>
            <button type="button" aria-label="Select in scene" className={clsx(pickButton, "ml-[5px]")}>
              <CursorIcon />
            </button>
          </div>
        </Field>
        <Field id="cut-by" label="Cut by">
          <SelectBox id="cut-by" value="SP1b" />
          <div className="ml-[4px] mr-px flex">
            <button type="button" aria-label="Pick member" className={pickButton}>
              <SmallMember />
            </button>
            <button type="button" aria-label="Pick plate" className={clsx(pickButton, "bg-[#d2d2d2]")}>
              <SmallPlate />
            </button>
            <button type="button" aria-label="Pick workplane" className={pickButton}>
              <MeshIcon />
            </button>
            <button type="button" aria-label="Select in scene" className={clsx(pickButton, "ml-[5px]")}>
              <CursorIcon />
            </button>
          </div>
        </Field>
        <Field id="method" label="Cutting method">
          <SelectBox id="method" value="Bounding box" />
        </Field>
        <Field id="remaining" label="Remaining part">
          <SelectBox id="remaining" value="+" />
        </Field>
        <Field id="offset" label="Offset [mm]">
          <input
            id="offset"
            defaultValue="0"
            className="h-[25px] min-w-0 flex-1 border border-[#dcdcdc] px-1 text-[#111]"
          />
        </Field>
        <span className="pointer-events-none absolute -bottom-[2px] -top-[2px] left-[114px] w-[213px] rounded-xl border-4 border-[#fb3434]" />
      </div>

      <div className="pt-[14px]">
        <SectionTitle>Welds</SectionTitle>
        <Field id="weld-size" label="All welds [mm]">
          <span className="relative flex h-[25px] w-[56px] items-center border border-[#dcdcdc] bg-[#eee] text-[#aaa]">
            <input id="weld-size" disabled defaultValue="0.0" className="w-full px-1" />
            <svg
              width="12"
              height="20"
              viewBox="0 0 12 20"
              fill="none"
              stroke="currentColor"
              strokeWidth="1.300"
              className="absolute right-[6px]"
              aria-hidden="true"
            >
              <path d="M1 7 6 1.500 11 7M1 13 6 18.500 11 13" />
            </svg>
          </span>
          <span className="relative ml-[4px] flex h-[25px] w-[52px] items-center">
            <select
              aria-label="Weld type"
              className="h-full w-full appearance-none border border-[#dcdcdc] bg-white"
            >
              <option value="butt" />
            </select>
            <Icon size={22} className="pointer-events-none absolute left-[2px]">
              <path d="M8 1H15V13L11 19V14L8 16ZM11 19 8 15" fill="#eee" />
              <path d="M1 20.500H21" />
              <path d="M7 21H16L14 18.500H9Z" fill={ORANGE} stroke="none" />
            </Icon>
            <Chevron className="pointer-events-none absolute right-[7px] text-[#333]" />
            <span className="pointer-events-none absolute -bottom-[9px] -left-[4px] -right-[5px] -top-[9px] rounded-xl border-4 border-[#fb3434]" />
          </span>
          <SelectBox id="weld-material" value="S 355" className="ml-[4px]" />
          <button type="button" aria-label="Add weld" className="ml-[4px] mr-px flex size-[25px] items-center justify-center">
            <Icon size={14}>
              <path d="M7 0V14M0 7H14" strokeWidth="1.600" />
            </Icon>
          </button>
        </Field>
      </div>
    </form>
  </aside>
);

const StatusBar = () => (
  <footer className="flex h-11 shrink-0 items-center gap-[22px] bg-black px-[9px] pb-1 text-[14px] text-[#e6e6e6]">
    <span>
      Design code: <b className="font-semibold text-white">EN</b>
    </span>
    <span>
      Analysis: <b className="font-semibold text-white">Capacity design</b>
    </span>
    <span>
      Units: <b className="font-semibold text-white">mm</b>
    </span>
  </footer>
);

const App = () => {
  return (
    <div className="flex min-h-screen flex-col bg-white font-['Open_Sans','Noto_Sans',sans-serif]">
      <Header />
      <Ribbon />
      <main className="flex flex-1">
        <Viewport />
        <div className="w-[6px] shrink-0 bg-[#c9c9c9]" />
        <PropertyPanel />
      </main>
      <StatusBar />
    </div>
  );
};

export default App;
